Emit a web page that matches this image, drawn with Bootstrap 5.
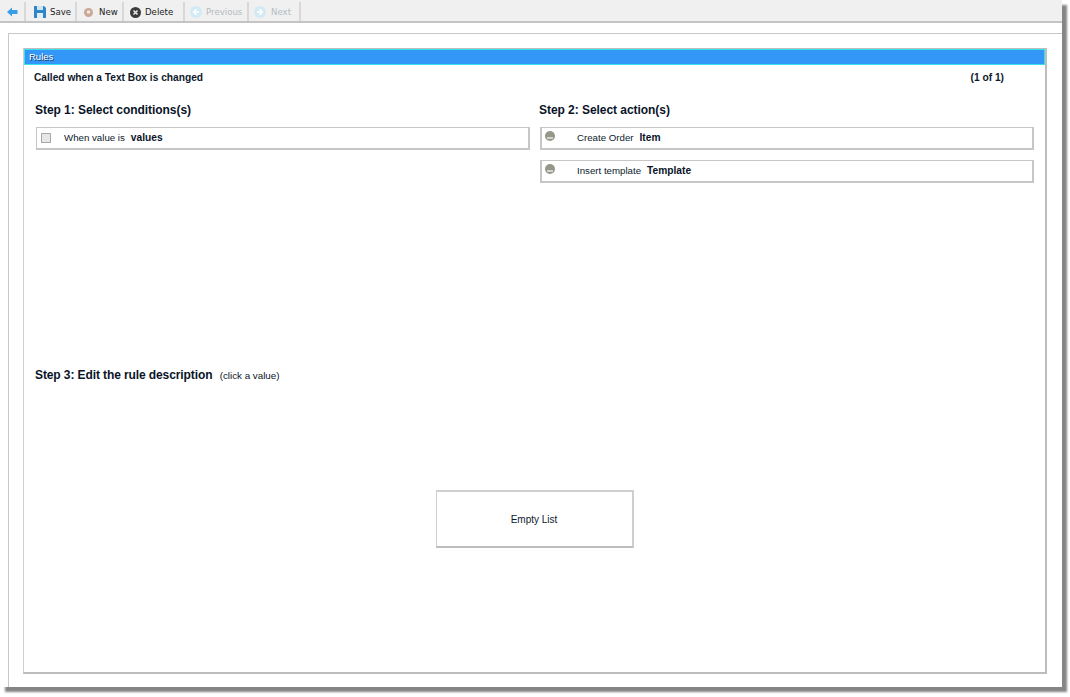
<!DOCTYPE html>
<html lang="en">
<head>
    <meta charset="UTF-8">
    <meta name="viewport" content="width=device-width, initial-scale=1.0">
    <title>Rules</title>
    <link href="https://cdn.jsdelivr.net/npm/bootstrap@5.3.0/dist/css/bootstrap.min.css" rel="stylesheet">
    <style>
        html, body { background: #fff; }
        body { height: 697px; overflow: hidden; font-family: "Liberation Sans", Arial, sans-serif; font-size: 10px; color: #0c1a2c; margin: 0; }

        .app-window { width: 1062px; height: 687px; background: #fff; box-shadow: 5px 5px 2px #858585; }

        .tool-strip { height: 23px; background: #f0f0f0; border-bottom: 2px solid #c4c4c4; padding-top: 2px; }
        .tool-btn { height: 19px; padding-top: 1px; font-family: "DejaVu Sans", sans-serif; font-size: 8.6px; color: #222; border-right: 2px solid #d8d8d8; flex: none; }
        .tool-btn.off { color: #b4bcc0; }
        .tool-btn svg { flex: none; }
        .tb-back { width: 26px; padding-left: 7px; }
        .tb-save { width: 51px; padding-left: 8px; gap: 4px; }
        .tb-new { width: 47px; padding-left: 7px; gap: 6px; }
        .tb-delete { width: 61px; padding-left: 6px; gap: 4px; }
        .tb-prev { width: 64px; padding-left: 5px; gap: 4px; }
        .tb-next { width: 52px; padding-left: 5px; gap: 5px; }

        .outer-frame { margin: 10px 0 0 8px; height: 654px; border-top: 1px solid #c8c8c8; border-left: 1px solid #c8c8c8; padding: 14px 15px 14px 14px; }
        .inner-frame { height: 626px; border-style: solid; border-color: #bdbdbd; border-width: 1px 2px 2px 1px; border-left-color: #cfcfcf; }

        .title-strip { height: 16px; background: #3397f7; border: 1px solid #3ce0ea; color: #fff; font-size: 9.5px; line-height: 13px; padding-left: 4px; text-shadow: 1px 1px 0 #16406e; }
        .called-row { height: 25px; padding: 0 41px 0 10px; font-size: 10.2px; font-weight: 700; }
        .steps-row { margin-top: 13px; height: 265px; }
        .step-col { width: 504px; flex: none; }
        .step-head { font-size: 12px; font-weight: 700; line-height: 14px; margin: 0 0 10px 11px; color: #0a1428; letter-spacing: -.05px; }
        .rule-box { width: 494px; height: 23px; margin: 0 0 10px 12px; border-style: solid; border-color: #c6c6c6; border-width: 1px 2px 2px 1px; font-size: 9.7px; }
        .rule-box b { font-size: 10.2px; margin-left: 6px; color: #0a1428; }
        .rule-box.act { border-left-width: 2px; }
        .rule-left { width: 27px; padding-left: 4px; padding-bottom: 1px; flex: none; }
        .rule-gap { width: 35px; flex: none; padding-left: 3px; padding-bottom: 4px; }
        .tick-box { width: 10px; height: 10px; border: 1px solid #a9a9a9; background: #e6e6e6; display: block; }
        .bullet-dot { width: 10px; height: 10px; border-radius: 50%; background: #96978a; display: block; position: relative; overflow: hidden; }
        .bullet-dot::after { content: ""; position: absolute; left: 2px; right: 2px; top: 6px; height: 2px; background: #d4d4cc; }

        .step3 { margin: 0 0 0 11px; font-size: 12px; font-weight: 700; line-height: 14px; color: #0a1428; letter-spacing: -.1px; }
        .step3 span { font-size: 9.8px; font-weight: 400; margin-left: 4px; letter-spacing: 0; }
        .empty-wrap { margin-top: 107px; }
        .empty-box { width: 198px; height: 58px; border-style: solid; border-color: #cfcfcf; border-width: 2px 2px 2px 1px; border-bottom-color: #bdbdbd; font-size: 10px; }
    </style>
</head>
<body>
    <div class="app-window">
        <div class="tool-strip d-flex align-items-center">
            <div class="tool-btn tb-back d-flex align-items-center">
                <svg width="11" height="10" viewBox="0 0 11 10"><path d="M0 5 5 .5V3h5.500v4H5v2.500z" fill="#3a9fe6"/></svg>
            </div>
            <div class="tool-btn tb-save d-flex align-items-center">
                <svg width="12" height="12" viewBox="0 0 12 12"><path d="M0 0h10l2 2v10H0z" fill="#2f86c6"/><path d="M3 0h6v4H3z" fill="#cfe3f2"/><path d="M3 7h6v5H3z" fill="#e4edf3"/></svg>
                <span>Save</span>
            </div>
            <div class="tool-btn tb-new d-flex align-items-center">
                <svg width="9" height="9" viewBox="0 0 9 9"><circle cx="4.500" cy="4.500" r="4.500" fill="#c9a898"/><circle cx="4.500" cy="4" r="1.800" fill="#f4e9e2"/></svg>
                <span>New</span>
            </div>
            <div class="tool-btn tb-delete d-flex align-items-center">
                <svg width="11" height="11" viewBox="0 0 11 11"><circle cx="5.500" cy="5.500" r="5.500" fill="#3c3c3c"/><path d="M3.500 3.500l4 4M7.500 3.500l-4 4" stroke="#e8e8e8" stroke-width="1.600"/></svg>
                <span>Delete</span>
            </div>
            <div class="tool-btn tb-prev off d-flex align-items-center">
                <svg width="12" height="12" viewBox="0 0 12 12"><circle cx="6" cy="6" r="6" fill="#d2eaf4"/><path d="M6.500 3 3.500 6l3 3M3.500 6H9" stroke="#fff" stroke-width="1.400" fill="none"/></svg>
                <span>Previous</span>
            </div>
            <div class="tool-btn tb-next off d-flex align-items-center">
                <svg width="12" height="12" viewBox="0 0 12 12"><circle cx="6" cy="6" r="6" fill="#d2eaf4"/><path d="M5.500 3l3 3-3 3M8.500 6H3" stroke="#fff" stroke-width="1.400" fill="none"/></svg>
                <span>Next</span>
            </div>
        </div>

        <div class="outer-frame">
            <div class="inner-frame">
                <div class="title-strip">Rules</div>
                <div class="called-row d-flex align-items-center justify-content-between">
                    <span>Called when a Text Box is changed</span>
                    <span>(1 of 1)</span>
                </div>
                <div class="steps-row d-flex">
                    <div class="step-col">
                        <div class="step-head">Step 1: Select conditions(s)</div>
                        <div class="rule-box d-flex align-items-center">
                            <div class="rule-left"><span class="tick-box"></span></div>
                            <span>When value is</span><b>values</b>
                        </div>
                    </div>
                    <div class="step-col">
                        <div class="step-head">Step 2: Select action(s)</div>
                        <div class="rule-box act d-flex align-items-center">
                            <div class="rule-gap"><span class="bullet-dot"></span></div>
                            <span>Create Order</span><b>Item</b>
                        </div>
                        <div class="rule-box act d-flex align-items-center">
                            <div class="rule-gap"><span class="bullet-dot"></span></div>
                            <span>Insert template</span><b>Template</b>
                        </div>
                    </div>
                </div>
                <div class="step3">Step 3: Edit the rule description <span>(click a value)</span></div>
                <div class="empty-wrap d-flex justify-content-center">
                    <div class="empty-box d-flex align-items-center justify-content-center">Empty List</div>
                </div>
            </div>
        </div>
    </div>
    <script src="https://cdn.jsdelivr.net/npm/bootstrap@5.3.0/dist/js/bootstrap.bundle.min.js"></script>
</body>
</html>
